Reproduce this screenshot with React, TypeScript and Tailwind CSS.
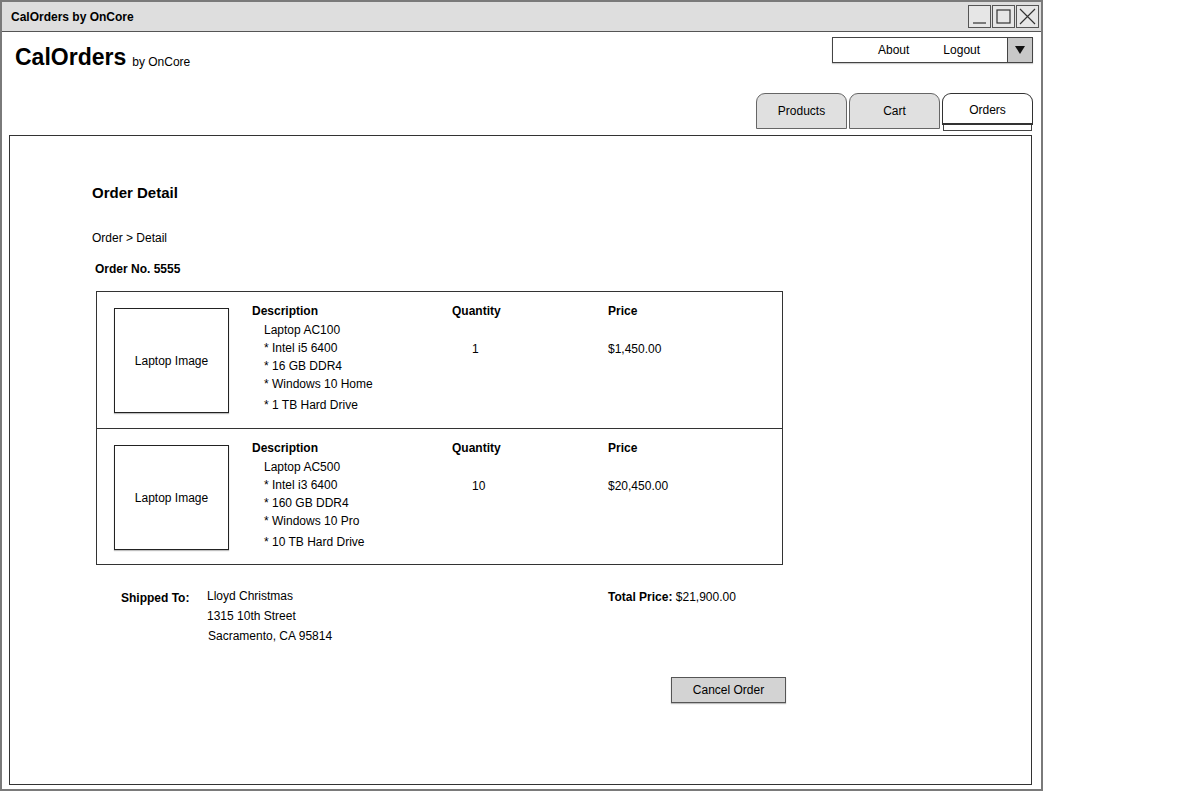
import React from 'react'

interface OrderItem {
  name: string
  specs: string[]
  quantity: string
  price: string
}

const items: OrderItem[] = [
  {
    name: 'Laptop AC100',
    specs: ['* Intel i5 6400', '* 16 GB DDR4', '* Windows 10 Home', '* 1 TB Hard Drive'],
    quantity: '1',
    price: '$1,450.00',
  },
  {
    name: 'Laptop AC500',
    specs: ['* Intel i3 6400', '* 160 GB DDR4', '* Windows 10 Pro', '* 10 TB Hard Drive'],
    quantity: '10',
    price: '$20,450.00',
  },
]

const WindowButton: React.FC<{ kind: 'min' | 'max' | 'close' }> = ({ kind }) => {
  return (
    <div className="w-[23px] h-[23px] border border-[#555] bg-[#e6e6e6] flex items-center justify-center">
      <svg width="19" height="19" viewBox="0 0 19 19" fill="none" stroke="#333" strokeWidth={1.2}>
        {kind === 'min' && <path d="M3 16h13" />}
        {kind === 'max' && <rect x="3" y="3" width="13" height="13" />}
        {kind === 'close' && <path d="M2 2l15 15M17 2L2 17" />}
      </svg>
    </div>
  )
}

const ItemRow: React.FC<{ item: OrderItem; divider?: boolean }> = ({ item, divider }) => {
  return (
    <div className={`h-[136px] flex items-start pl-[17px] pt-[11px] ${divider ? 'border-t border-[#333]' : ''}`}>
      <div className="mt-[5px] w-[115px] h-[105px] border border-[#222] flex items-center justify-center text-[12px] shadow-[0_1px_1px_rgba(0,0,0,0.25)]">
        Laptop Image
      </div>
      <div className="ml-[23px] w-[200px]">
        <div className="font-bold text-[12px] leading-[16px]">Description</div>
        <div className="pl-[12px] mt-[2px] text-[12px] leading-[18px]">
          <div>{item.name}</div>
          {item.specs.map((s, i) => (
            <div key={s} className={i === item.specs.length - 1 ? 'mt-[3px]' : ''}>
              {s}
            </div>
          ))}
        </div>
      </div>
      <div className="w-[156px]">
        <div className="font-bold text-[12px] leading-[16px]">Quantity</div>
        <div className="mt-[22px] pl-[20px] text-[12px] leading-[16px]">{item.quantity}</div>
      </div>
      <div>
        <div className="font-bold text-[12px] leading-[16px]">Price</div>
        <div className="mt-[22px] text-[12px] leading-[16px]">{item.price}</div>
      </div>
    </div>
  )
}

export default function App() {
  return (
    <div className="w-[1200px] h-[800px] bg-white text-black font-['Liberation_Sans',Arial,sans-serif]">
      <div className="w-[1043px] h-[791px] border-2 border-[#7a7a7a] flex flex-col">
        {/* title bar */}
        <div className="h-[30px] shrink-0 bg-[#dedede] border-b border-[#555] flex items-center justify-between pl-[9px] pr-[2px]">
          <span className="font-bold text-[12px]">CalOrders by OnCore</span>
          <div className="flex gap-[1px] mt-[-1px]">
            <WindowButton kind="min" />
            <WindowButton kind="max" />
            <WindowButton kind="close" />
          </div>
        </div>

        <div className="flex-1 flex flex-col pl-[7px] pr-[8px] pb-[4px]">
          {/* header */}
          <div className="flex justify-between items-start">
            <div className="flex items-end mt-[11px] ml-[6px]">
              <span className="font-bold text-[23px] leading-[28px]">CalOrders</span>
              <span className="text-[12px] leading-[18px] ml-[6px]">by OnCore</span>
            </div>
            <div className="mt-[5px] w-[201px] h-[26px] border border-[#444] flex items-stretch shadow-[0_1px_1px_rgba(0,0,0,0.2)]">
              <div className="flex-1 flex items-center text-[12px]">
                <span className="ml-[45px]">About</span>
                <span className="ml-[34px]">Logout</span>
              </div>
              <div className="w-[25px] bg-[#c8c8c8] border-l border-[#444] flex items-center justify-center">
                <svg width="10" height="8" viewBox="0 0 10 8">
                  <path d="M0 0h10L5 8z" fill="#111" />
                </svg>
              </div>
            </div>
          </div>

          {/* tabs */}
          <div className="flex justify-end items-start gap-[2px] mt-[22px]">
            <div className="w-[91px] h-[36px] bg-[#e0e0e0] border border-[#666] rounded-t-[9px] flex items-center justify-center text-[12px]">
              Products
            </div>
            <div className="w-[91px] h-[36px] bg-[#e0e0e0] border border-[#666] rounded-t-[9px] flex items-center justify-center text-[12px]">
              Cart
            </div>
            <div className="w-[91px] flex flex-col">
              <div className="h-[32px] bg-white border border-[#333] border-b-2 rounded-t-[9px] flex items-center justify-center text-[12px] pt-[2px]">
                Orders
              </div>
              <div className="h-[6px] mx-[1px] border-x border-b border-[#444] bg-white" />
            </div>
          </div>

          {/* content panel */}
          <div className="flex-1 mt-[4px] mr-[1px] border border-[#333] pl-[82px] pt-[47px]">
            <div className="font-bold text-[15px] leading-[20px]">Order Detail</div>
            <div className="mt-[26px] text-[12px] leading-[18px]">Order &gt; Detail</div>
            <div className="mt-[14px] ml-[3px] font-bold text-[12px] leading-[16px]">Order No. 5555</div>

            <div className="mt-[14px] ml-[4px] w-[687px] border border-[#333]">
              {items.map((item, i) => (
                <ItemRow key={item.name} item={item} divider={i > 0} />
              ))}
            </div>

            <div className="mt-[21px] ml-[29px] flex items-start">
              <div className="w-[86px] font-bold text-[12px] leading-[20px] pt-[2px]">Shipped To:</div>
              <div className="w-[401px] text-[12px] leading-[20px]">
                <div>Lloyd Christmas</div>
                <div>1315 10th Street</div>
                <div className="ml-[1px]">Sacramento, CA 95814</div>
              </div>
              <div className="text-[12px] leading-[20px] pt-[1px]">
                <span className="font-bold">Total Price:</span> $21,900.00
              </div>
            </div>

            <div className="w-[694px] flex justify-end mt-[31px]">
              <button className="w-[115px] h-[26px] bg-[#d3d3d3] border border-[#555] text-[12px] shadow-[0_1px_1px_rgba(0,0,0,0.25)]">
                Cancel Order
              </button>
            </div>
          </div>
        </div>
      </div>
    </div>
  )
}
